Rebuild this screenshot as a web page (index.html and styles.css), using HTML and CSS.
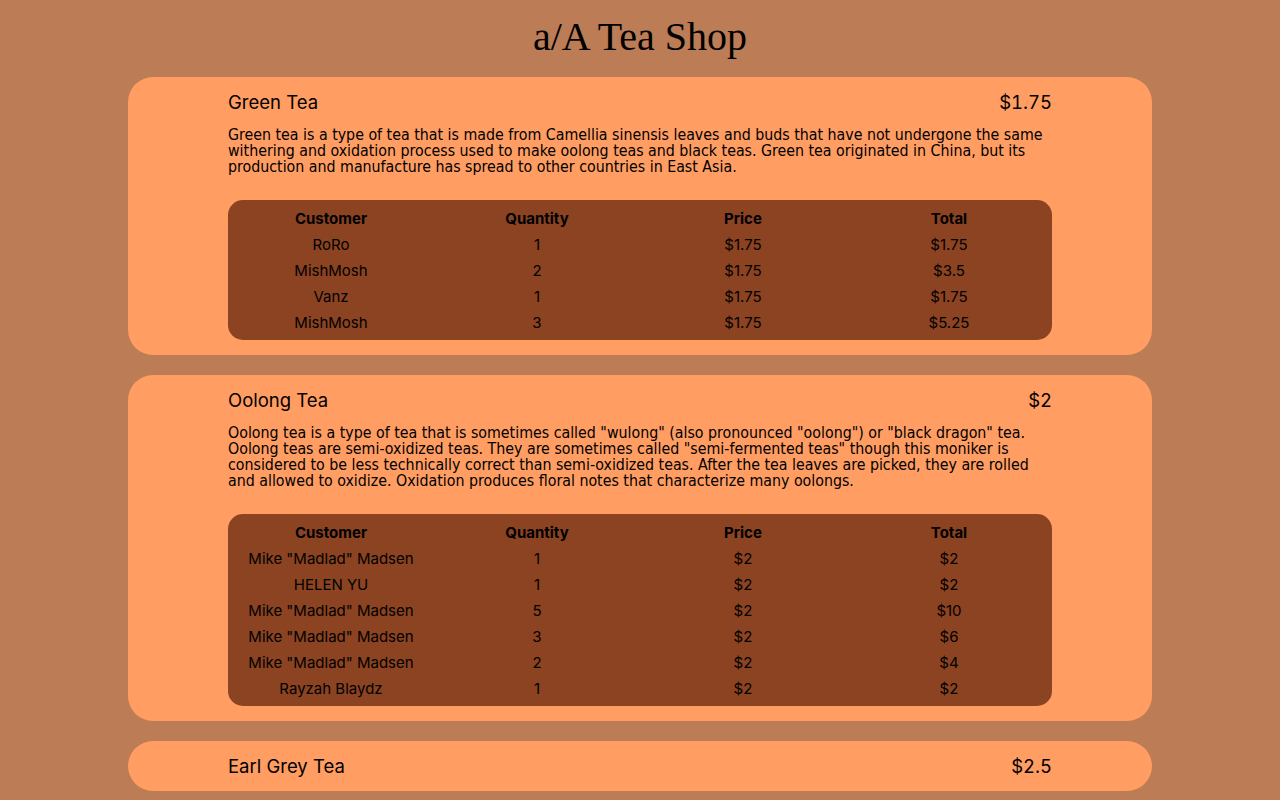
FILE: index.html
```html
<!DOCTYPE html>
<html>
<head>
<meta charset="utf-8">
<title>a/A Tea Shop</title>
<link rel="stylesheet" href="styles.css">
</head>
<body>
<h1 class="title">a/A Tea Shop</h1>
<main class="list">
  <section class="tea">
    <div class="tea-head"><span>Green Tea</span><span class="price">$1.75</span></div>
    <p class="desc">Green tea is a type of tea that is made from Camellia sinensis leaves and buds that have not undergone the same withering and oxidation process used to make oolong teas and black teas. Green tea originated in China, but its production and manufacture has spread to other countries in East Asia.</p>
    <table class="orders">
      <thead><tr><th>Customer</th><th>Quantity</th><th>Price</th><th>Total</th></tr></thead>
      <tbody>
        <tr><td>RoRo</td><td>1</td><td>$1.75</td><td>$1.75</td></tr>
        <tr><td>MishMosh</td><td>2</td><td>$1.75</td><td>$3.5</td></tr>
        <tr><td>Vanz</td><td>1</td><td>$1.75</td><td>$1.75</td></tr>
        <tr><td>MishMosh</td><td>3</td><td>$1.75</td><td>$5.25</td></tr>
      </tbody>
    </table>
  </section>
  <section class="tea">
    <div class="tea-head"><span>Oolong Tea</span><span class="price">$2</span></div>
    <p class="desc">Oolong tea is a type of tea that is sometimes called "wulong" (also pronounced "oolong") or "black dragon" tea. Oolong teas are semi-oxidized teas. They are sometimes called "semi-fermented teas" though this moniker is considered to be less technically correct than semi-oxidized teas. After the tea leaves are picked, they are rolled and allowed to oxidize. Oxidation produces floral notes that characterize many oolongs.</p>
    <table class="orders">
      <thead><tr><th>Customer</th><th>Quantity</th><th>Price</th><th>Total</th></tr></thead>
      <tbody>
        <tr><td>Mike "Madlad" Madsen</td><td>1</td><td>$2</td><td>$2</td></tr>
        <tr><td>HELEN YU</td><td>1</td><td>$2</td><td>$2</td></tr>
        <tr><td>Mike "Madlad" Madsen</td><td>5</td><td>$2</td><td>$10</td></tr>
        <tr><td>Mike "Madlad" Madsen</td><td>3</td><td>$2</td><td>$6</td></tr>
        <tr><td>Mike "Madlad" Madsen</td><td>2</td><td>$2</td><td>$4</td></tr>
        <tr><td>Rayzah Blaydz</td><td>1</td><td>$2</td><td>$2</td></tr>
      </tbody>
    </table>
  </section>
  <section class="tea">
    <div class="tea-head"><span>Earl Grey Tea</span><span class="price">$2.5</span></div>
  </section>
</main>
</body>
</html>
```
FILE: styles.css
```css
html, body {
  margin: 0;
  padding: 0;
}
body {
  background: #bc7c56;
  color: #000;
  font-family: Inter, "Liberation Sans", sans-serif;
}
.title {
  margin: 0;
  padding-top: 14px;
  height: 77px;
  box-sizing: border-box;
  text-align: center;
  font-family: "Liberation Serif", serif;
  font-weight: normal;
  font-size: 40px;
  line-height: 46px;
}
.list {
  width: 1024px;
  margin: 0 auto;
  display: flex;
  flex-direction: column;
  gap: 20px;
}
.tea {
  background: #ff9d63;
  border-radius: 25px;
  padding: 15px 100px;
}
.tea-head {
  display: flex;
  justify-content: space-between;
  font-size: 18.5px;
  line-height: 20px;
}
.price {
  font-variant-numeric: tabular-nums;
}
.desc {
  margin: 15px 0 25px;
  font-family: "DejaVu Sans Condensed", "DejaVu Sans", sans-serif;
  font-size: 15.8px;
  line-height: 16px;
}
.orders {
  width: 100%;
  table-layout: fixed;
  border-collapse: collapse;
  background: #8c4321;
  border-radius: 15px;
  font-size: 15px;
}
.orders th, .orders td {
  height: 24px;
  padding: 2px 0 0;
  text-align: center;
  line-height: 24px;
}
.orders thead tr th { padding-top: 7px; }
.orders tbody tr:last-child td { padding-bottom: 5px; }
.orders th { font-weight: 700; }
```
